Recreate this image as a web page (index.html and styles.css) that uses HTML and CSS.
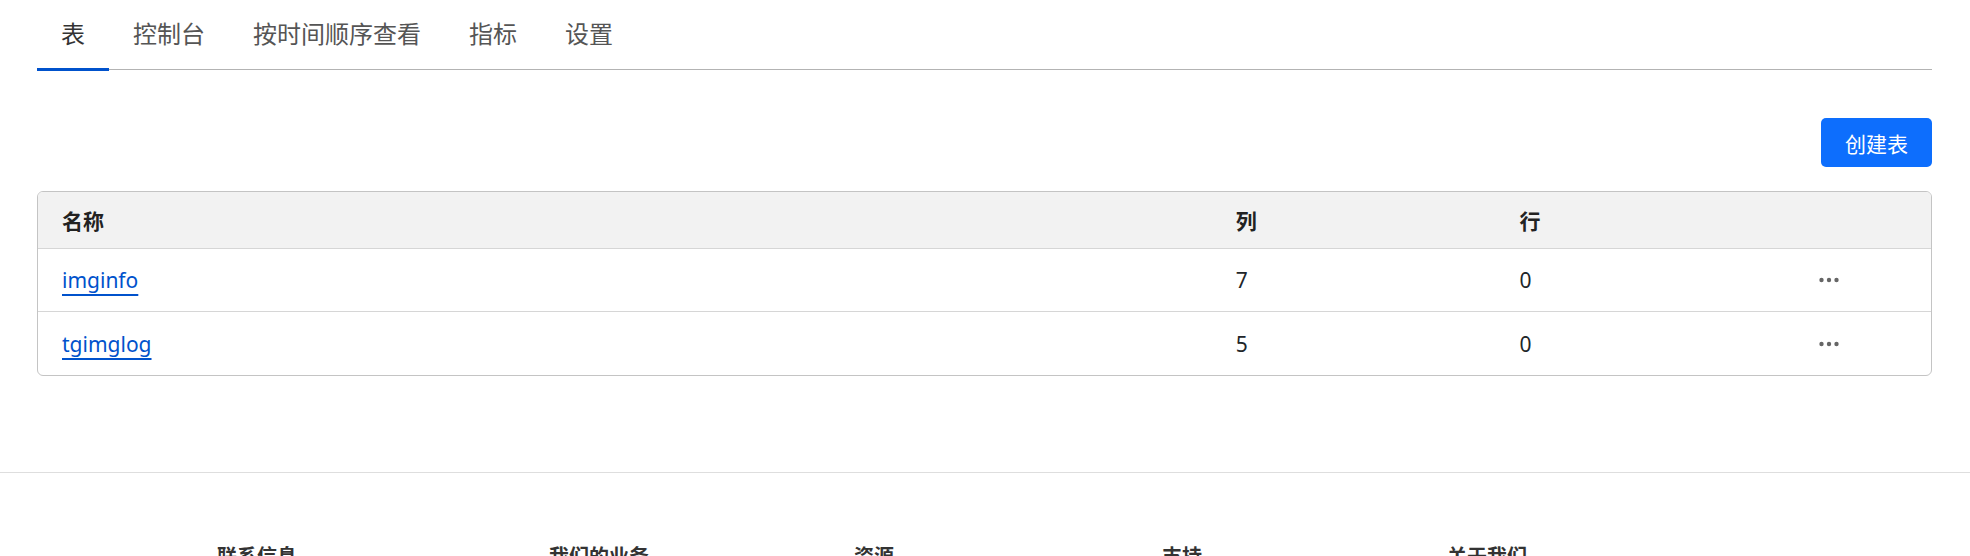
FILE: index.html
```html
<!DOCTYPE html>
<html lang="zh-CN">
<head>
<meta charset="utf-8">
<title>表</title>
<link rel="stylesheet" href="styles.css">
</head>
<body>
<div class="container">
  <nav class="tabs">
    <a class="tab active">表</a>
    <a class="tab">控制台</a>
    <a class="tab">按时间顺序查看</a>
    <a class="tab">指标</a>
    <a class="tab">设置</a>
  </nav>
  <div class="toolbar">
    <button class="btn-primary">创建表</button>
  </div>
  <div class="table">
    <div class="row head">
      <div class="cell">名称</div>
      <div class="cell">列</div>
      <div class="cell">行</div>
      <div class="cell"></div>
    </div>
    <div class="row">
      <div class="cell"><a class="link">imginfo</a></div>
      <div class="cell">7</div>
      <div class="cell">0</div>
      <div class="cell"><span class="more"><svg width="20" height="6" viewBox="0 0 20 6"><circle cx="2.5" cy="3" r="2.2"/><circle cx="10" cy="3" r="2.2"/><circle cx="17.5" cy="3" r="2.2"/></svg></span></div>
    </div>
    <div class="row last">
      <div class="cell"><a class="link">tgimglog</a></div>
      <div class="cell">5</div>
      <div class="cell">0</div>
      <div class="cell"><span class="more"><svg width="20" height="6" viewBox="0 0 20 6"><circle cx="2.5" cy="3" r="2.2"/><circle cx="10" cy="3" r="2.2"/><circle cx="17.5" cy="3" r="2.2"/></svg></span></div>
    </div>
  </div>
</div>
<footer class="footer">
  <div class="footer-cols">
    <div class="fcol"><h4>联系信息</h4></div>
    <div class="fcol"><h4>我们的业务</h4></div>
    <div class="fcol"><h4>资源</h4></div>
    <div class="fcol"><h4>支持</h4></div>
    <div class="fcol"><h4>关于我们</h4></div>
  </div>
</footer>
</body>
</html>
```
FILE: styles.css
```css
* { box-sizing: border-box; }
body {
  margin: 0;
  font-family: "Noto Sans", "Noto Sans CJK SC", sans-serif;
  color: #212529;
  background: #fff;
}
.container {
  padding: 0 38px 0 37px;
}
.tabs {
  display: flex;
  border-bottom: 1px solid #b3b3b3;
}
.tab {
  padding: 16px 24px;
  font-size: 24px;
  line-height: 36px;
  color: #555;
  border-bottom: 3px solid transparent;
  margin-bottom: -2px;
  cursor: pointer;
}
.tab.active {
  color: #333;
  border-bottom-color: #0052cc;
}
.toolbar {
  display: flex;
  justify-content: flex-end;
  padding-top: 48px;
  margin-bottom: 24px;
}
.btn-primary {
  height: 49px;
  padding: 0 24px;
  background: #0d6efd;
  color: #fff;
  border: none;
  border-radius: 5px;
  font-family: inherit;
  font-size: 21px;
}
.table {
  border: 1px solid #c4c4c4;
  border-radius: 6px;
  overflow: hidden;
}
.row {
  display: grid;
  grid-template-columns: 62% 15% 15% 8%;
  height: 63px;
  border-bottom: 1px solid #d6d6d6;
  font-size: 21px;
}
.row.last { border-bottom: none; }
.row.head {
  height: 57px;
  background: #f2f2f2;
  font-weight: 700;
  color: #222;
}
.cell {
  display: flex;
  align-items: center;
  padding: 0 24px;
}
.link {
  color: #0052cc;
  text-decoration: underline;
  text-decoration-thickness: 2px;
  text-underline-offset: 6px;
  cursor: pointer;
}
.more {
  display: flex;
  margin-left: 15px;
  fill: #666;
}
.footer {
  margin-top: 96px;
  border-top: 1px solid #dedede;
  padding-top: 70px;
}
.footer-cols {
  display: grid;
  grid-template-columns: 332px 305px 308px 285px 1fr;
  padding-left: 217px;
}
.fcol h4 {
  margin: 0;
  font-size: 20px;
  line-height: 28px;
  font-weight: 700;
  color: #333;
}
```
